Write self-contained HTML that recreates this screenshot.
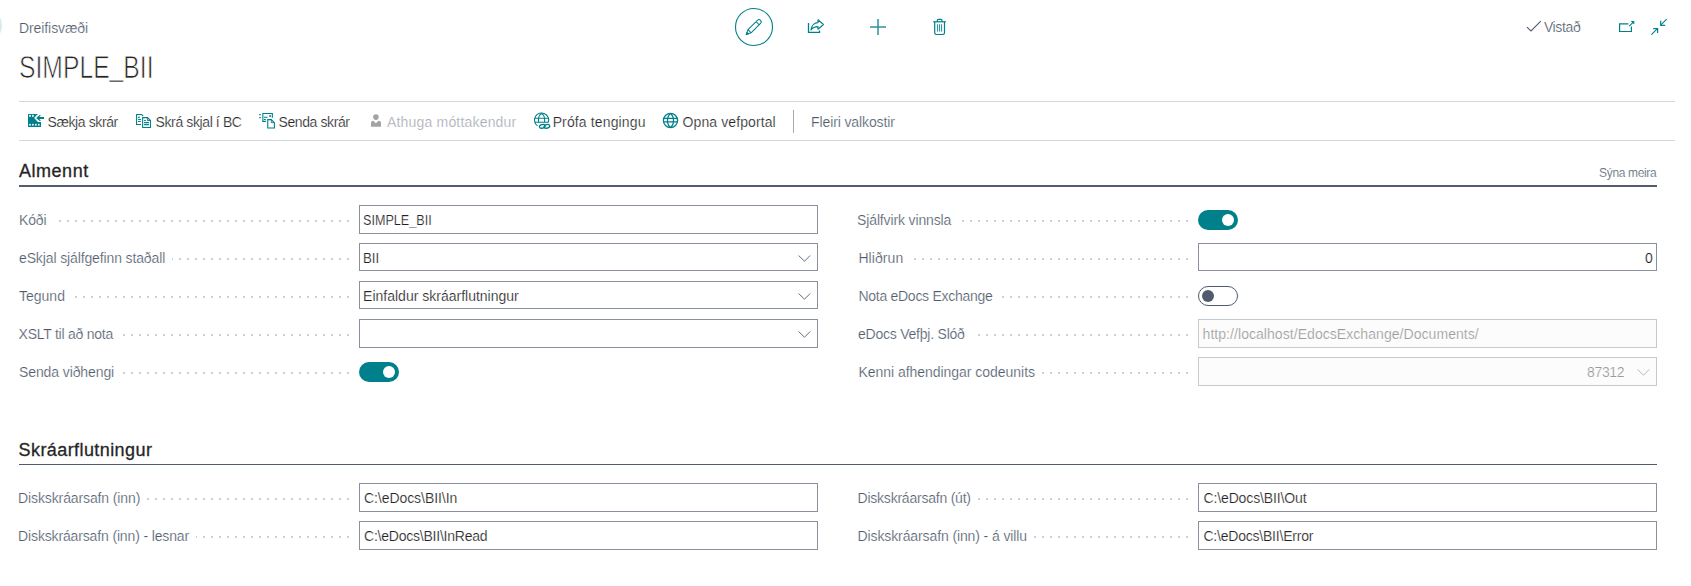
<!DOCTYPE html>
<html><head><meta charset="utf-8">
<style>
html,body{margin:0;padding:0;}
body{width:1691px;height:586px;overflow:hidden;background:#fff;position:relative;font-family:"Liberation Sans",sans-serif;font-size:13.5px;color:#212121;}
.x{position:absolute;white-space:nowrap;line-height:20px;-webkit-text-stroke:0.2px #fff;}
.hr{position:absolute;height:1px;background:#d4d7db;}
.blob{position:absolute;left:-33px;top:7.5px;width:35px;height:35px;border-radius:50%;background:#d6edf0;}
.title{position:absolute;left:19px;top:47px;font-size:30.5px;line-height:40px;color:#262626;transform:scaleX(0.81);transform-origin:0 0;-webkit-text-stroke:0.75px #fff;white-space:nowrap;}
.secline{position:absolute;left:19px;width:1638px;}
.dots{position:absolute;height:2px;background-image:linear-gradient(to right,#cdd0d5 2px,transparent 2px);background-size:8px 2px;background-repeat:repeat-x;}
.box{position:absolute;width:457px;height:27px;border:1px solid #8a919c;background:#fff;}
.box.d{border-color:#c6c9ce;background:#fcfcfc;}
.tog{position:absolute;width:40px;height:20px;border-radius:10px;box-sizing:border-box;}
.tog.on{background:#00808a;}
.tog.on i{position:absolute;left:24px;top:4px;width:12px;height:12px;border-radius:50%;background:#fff;}
.tog.off{border:1px solid #505c6d;background:#fff;}
.tog.off i{position:absolute;left:3px;top:3px;width:12px;height:12px;border-radius:50%;background:#505c6d;}
svg{position:absolute;overflow:visible;}
</style></head>
<body>
<div class="blob"></div>
<div class="title" id="title">SIMPLE<span style="position:relative;top:-2.5px">_</span>BII</div>
<!-- top center icons -->
<svg style="left:0;top:0" width="1691" height="150" viewBox="0 0 1691 150">
<g fill="none" stroke="#00808a" stroke-linejoin="round" stroke-linecap="round">
<circle cx="754" cy="27" r="18.5" stroke-width="1.1"/>
<g transform="translate(746.3,34.5) rotate(-45)" stroke-width="1.0">
<path d="M4.6,-2.2 L17.9,-2.2 A2.2,2.2 0 0 1 17.9,2.2 L4.6,2.2 Z M4.6,-2.2 L0,0 L4.6,2.2 M16,-2.2 L16,2.2"/>
<path d="M0,0 L1.9,-1 L1.9,1 Z" fill="#00808a"/>
</g>
<path d="M808.5,23 V32.4 H819.5 V30.6" stroke-width="1.3" stroke-linecap="butt" stroke-linejoin="miter"/>
<path d="M811,30 C811.5,25.5 814.5,22.6 818,22.6 L818,19.8 L823.4,24.5 L818,29.2 L818,26.6 C815,26.6 812.6,27.6 811,30 Z" stroke-width="1.15"/>
<path d="M870,27 H886 M878,19 V35" stroke-width="1.5" stroke="#2e9499" stroke-linecap="butt"/>
<path d="M937.3,21.5 V20.6 Q937.3,19.4 938.5,19.4 H940.8 Q942,19.4 942,20.6 V21.5" stroke-width="1.2"/>
<path d="M933.2,21.8 H945.8" stroke-width="1.2" stroke-linecap="butt"/>
<path d="M934.7,22 V32.8 Q934.7,34.5 936.4,34.5 H942.8 Q944.5,34.5 944.5,32.8 V22" stroke-width="1.2"/>
<path d="M937.6,24.2 V31.6 M939.6,24.2 V31.6 M941.6,24.2 V31.6" stroke-width="0.9" stroke-linecap="butt"/>
<path d="M1527,27.1 L1531,30.9 L1540.8,21.2" stroke="#505c6d" stroke-width="1.1" stroke-linecap="butt" stroke-linejoin="miter"/>
<path d="M1628.4,23.8 H1619.6 V31.5 H1631.4 V26.6" stroke-width="1.2" stroke-linecap="butt" stroke-linejoin="miter"/>
<path d="M1629.2,26.2 L1633.6,21.8" stroke-width="1.1" stroke-linecap="butt"/>
<path d="M1630.6,20.9 H1634.3 V24.6 Z" fill="#00808a" stroke="none"/>
<path d="M1651.4,34.6 L1657.2,28.8 M1666.6,19.2 L1661,24.8" stroke-width="1.1" stroke-linecap="butt"/>
<path d="M1653.2,28.6 H1657.6 V33 M1660.7,20.8 V25.3 H1665.2" stroke-width="1.2" stroke-linecap="butt" stroke-linejoin="miter"/>
</g>
<!-- action bar icons -->
<g fill="#00808a" stroke="none">
<path d="M28,114 H37.8 L34.1,117.9 L37.9,121.9 H41 V127 H28 Z"/>
<g fill="#fff"><rect x="29.2" y="114.9" width="1.6" height="1.9"/><rect x="32.1" y="114.9" width="1.6" height="1.9"/>
<rect x="29.2" y="123.9" width="1.6" height="1.7"/><rect x="32.1" y="123.9" width="1.6" height="1.7"/><rect x="35.1" y="123.9" width="1.6" height="1.7"/><rect x="38" y="123.9" width="1.6" height="1.7"/></g>
<path d="M36.2,118 L39.6,114.9 L41,115.4 L39.2,117.1 H44 V118.9 H39.2 L41,120.6 L39.6,121.1 Z"/>
</g>
<g fill="none" stroke="#00808a" stroke-width="1.1" stroke-linejoin="miter" stroke-linecap="butt">
<path d="M141,124.5 H136.6 V114.55 H141.6 L143.2,116.2"/>
<path d="M138.1,117.35 H139.8 M138.1,119.45 H140.9 M138.1,121.55 H140.9"/>
<path d="M142.65,117.6 H147.5 L150.5,120.6 V127.5 H142.65 Z"/>
<path d="M147.4,117.8 V120.5 H150.3" stroke-width="0.9"/>
<path d="M144.1,120.45 H145.8 M144.1,122.6 H148.9 M144.1,124.6 H148.9"/>
</g>
<g fill="none" stroke="#00808a" stroke-width="1.1" stroke-linejoin="miter" stroke-linecap="butt">
<path d="M259.2,114.55 H260.7 M259.2,117.65 H260.7" stroke-width="1.2"/>
<path d="M266,121.4 H262.85 V113.55 H272.35 V117.8"/>
<rect x="269.2" y="115.2" width="1.8" height="1.6" fill="#00808a" stroke="none"/>
<path d="M264,117.3 H267.6 M264,119.55 H265.8"/>
<path d="M267.75,119.65 H271.3 L274.4,122.7 V128 H267.75 Z"/>
<path d="M271.3,119.8 V122.6 H274.2" stroke-width="0.9"/>
</g>
<g fill="#a3a3a3" stroke="none">
<circle cx="375.9" cy="117.1" r="2.8"/>
<path d="M371,126.8 V123 Q371,120.8 373.2,120.8 L375.9,123.2 L378.6,120.8 Q381,120.8 381,123 V126.8 Z"/>
</g>
<g fill="none" stroke="#00808a" stroke-width="1.1">
<path d="M537.5,125.9 A7.1,7.1 0 1 1 548.3,122.5"/>
<path d="M534.6,118.3 H548.7 M534.8,122.3 H548.3"/>
<path d="M541.6,113.2 C539.2,115 538.5,117 538.5,118.3 V122.3 M541.6,113.2 C544,115 544.6,117 544.6,118.3 V122.3"/>
<ellipse cx="542.3" cy="126.3" rx="2.9" ry="1.8" transform="rotate(-15 542.3 126.3)" stroke-width="1.3"/>
<ellipse cx="546.9" cy="126.3" rx="2.9" ry="1.8" transform="rotate(-15 546.9 126.3)" stroke-width="1.3"/>
</g>
<g fill="none" stroke="#00808a" stroke-width="1.3">
<circle cx="670.5" cy="120.5" r="7.1"/>
<path d="M663.4,118.4 H677.6 M663.4,121.9 H677.6"/>
<path d="M670.5,113.4 C666.5,116.5 666.5,124.5 670.5,127.6 M670.5,113.4 C674.5,116.5 674.5,124.5 670.5,127.6"/>
</g>
</svg>
<div class="hr" style="left:19px;top:101px;width:1656px;"></div>
<div class="hr" style="left:19px;top:140px;width:1656px;"></div>
<div style="position:absolute;left:793px;top:110px;width:1px;height:23px;background:#a3a9b2;"></div>
<div class="secline" style="top:185px;height:2px;background:#525c6e;"></div>
<div class="secline" style="top:464px;height:1px;background:#505c6d;"></div>
<div class="box" style="left:359px;top:205px;height:27px;"></div>
<div class="box" style="left:359px;top:243px;height:26px;"></div>
<svg style="left:798px;top:255px" width="13" height="7" viewBox="0 0 13 7"><polyline points="0.6,0.5 6.5,6.2 12.2,0.5" fill="none" stroke="#505c6d" stroke-width="0.9"/></svg>
<div class="box" style="left:359px;top:281px;height:26px;"></div>
<svg style="left:798px;top:293px" width="13" height="7" viewBox="0 0 13 7"><polyline points="0.6,0.5 6.5,6.2 12.2,0.5" fill="none" stroke="#505c6d" stroke-width="0.9"/></svg>
<div class="box" style="left:359px;top:319px;height:27px;"></div>
<svg style="left:798px;top:331px" width="13" height="7" viewBox="0 0 13 7"><polyline points="0.6,0.5 6.5,6.2 12.2,0.5" fill="none" stroke="#505c6d" stroke-width="0.9"/></svg>
<div class="tog on" style="left:359px;top:362px;"><i></i></div>
<div class="tog on" style="left:1198px;top:210px;"><i></i></div>
<div class="box" style="left:1198px;top:243px;height:26px;"></div>
<div class="tog off" style="left:1198px;top:286px;"><i></i></div>
<div class="box d" style="left:1198px;top:319px;height:27px;"></div>
<div class="box d" style="left:1198px;top:357px;height:27px;"></div>
<svg style="left:1637px;top:369px" width="13" height="7" viewBox="0 0 13 7"><polyline points="0.6,0.5 6.5,6.2 12.2,0.5" fill="none" stroke="#a9aeb5" stroke-width="0.9"/></svg>
<div class="box" style="left:359px;top:483px;height:27px;"></div>
<div class="box" style="left:359px;top:521px;height:27px;"></div>
<div class="box" style="left:1198px;top:483px;height:27px;"></div>
<div class="box" style="left:1198px;top:521px;height:27px;"></div>
<div class="x" id="crumb" style="left:19.00px;font-size:14px;letter-spacing:-0.090px;top:18px;color:#505c6d;">Dreifisvæði</div>
<div class="x" id="act1" style="left:47.55px;font-size:14px;letter-spacing:-0.405px;top:112px;color:#262626;">Sækja skrár</div>
<div class="x" id="act2" style="left:155.55px;font-size:14px;letter-spacing:-0.386px;top:112px;color:#262626;">Skrá skjal í BC</div>
<div class="x" id="act3" style="left:278.55px;font-size:14px;letter-spacing:-0.405px;top:112px;color:#262626;">Senda skrár</div>
<div class="x" id="act4" style="left:387.00px;font-size:14px;letter-spacing:0.185px;top:112px;color:#a6abb3;">Athuga móttakendur</div>
<div class="x" id="act5" style="left:552.65px;font-size:14px;letter-spacing:0.138px;top:112px;color:#262626;">Prófa tengingu</div>
<div class="x" id="act6" style="left:682.55px;font-size:14px;letter-spacing:0.104px;top:112px;color:#262626;">Opna vefportal</div>
<div class="x" id="act7" style="left:811.10px;font-size:14px;letter-spacing:-0.120px;top:112px;color:#505c6d;">Fleiri valkostir</div>
<div class="x" id="vistad" style="left:1543.90px;font-size:14px;letter-spacing:-0.360px;top:17px;color:#505c6d;">Vistað</div>
<div class="x" id="sec1" style="left:19.00px;font-size:18px;letter-spacing:0.525px;top:159px;color:#262626;line-height:24px;-webkit-text-stroke:0.3px #262626;">Almennt</div>
<div class="x" id="syna" style="left:1599.10px;font-size:12px;letter-spacing:-0.350px;top:163px;color:#505c6d;">Sýna meira</div>
<div class="x" id="sec2" style="left:18.55px;font-size:18px;letter-spacing:0.420px;top:438px;color:#262626;line-height:24px;-webkit-text-stroke:0.3px #262626;">Skráarflutningur</div>
<div class="x" id="l1" style="left:19.00px;font-size:14px;letter-spacing:-0.150px;top:210px;color:#505c6d;">Kóði</div>
<div class="dots" style="left:53px;top:220px;width:296px;background-position:6px 0;"></div>
<div class="x" id="l2" style="left:19.00px;font-size:14px;letter-spacing:-0.126px;top:248px;color:#505c6d;">eSkjal sjálfgefinn staðall</div>
<div class="dots" style="left:172px;top:258px;width:177px;background-position:7px 0;"></div>
<div class="x" id="l3" style="left:19.00px;font-size:14px;letter-spacing:0.000px;top:286px;color:#505c6d;">Tegund</div>
<div class="dots" style="left:72px;top:296px;width:277px;background-position:3px 0;"></div>
<div class="x" id="l4" style="left:18.55px;font-size:14px;letter-spacing:-0.240px;top:324px;color:#505c6d;">XSLT til að nota</div>
<div class="dots" style="left:121px;top:334px;width:228px;background-position:2px 0;"></div>
<div class="x" id="l5" style="left:19.00px;font-size:14px;letter-spacing:-0.104px;top:362px;color:#505c6d;">Senda viðhengi</div>
<div class="dots" style="left:121px;top:372px;width:228px;background-position:2px 0;"></div>
<div class="x" id="r1" style="left:857.10px;font-size:14px;letter-spacing:-0.141px;top:210px;color:#505c6d;">Sjálfvirk vinnsla</div>
<div class="dots" style="left:959px;top:220px;width:229px;background-position:3px 0;"></div>
<div class="x" id="r2" style="left:858.45px;font-size:14px;letter-spacing:0.075px;top:248px;color:#505c6d;">Hliðrun</div>
<div class="dots" style="left:910px;top:258px;width:278px;background-position:4px 0;"></div>
<div class="x" id="r3" style="left:858.45px;font-size:14px;letter-spacing:-0.275px;top:286px;color:#505c6d;">Nota eDocs Exchange</div>
<div class="dots" style="left:1000px;top:296px;width:188px;background-position:2px 0;"></div>
<div class="x" id="r4" style="left:858.00px;font-size:14px;letter-spacing:-0.225px;top:324px;color:#505c6d;">eDocs Vefþj. Slóð</div>
<div class="dots" style="left:972px;top:334px;width:216px;background-position:6px 0;"></div>
<div class="x" id="r5" style="left:858.45px;font-size:14px;letter-spacing:-0.035px;top:362px;color:#505c6d;">Kenni afhendingar codeunits</div>
<div class="dots" style="left:1042px;top:372px;width:146px;background-position:0px 0;"></div>
<div class="x" id="l6" style="left:18.10px;font-size:14px;letter-spacing:-0.118px;top:488px;color:#505c6d;">Diskskráarsafn (inn)</div>
<div class="dots" style="left:147px;top:498px;width:202px;background-position:0px 0;"></div>
<div class="x" id="l7" style="left:18.10px;font-size:14px;letter-spacing:-0.145px;top:526px;color:#505c6d;">Diskskráarsafn (inn) - lesnar</div>
<div class="dots" style="left:196px;top:536px;width:153px;background-position:7px 0;"></div>
<div class="x" id="r6" style="left:857.55px;font-size:14px;letter-spacing:-0.225px;top:488px;color:#505c6d;">Diskskráarsafn (út)</div>
<div class="dots" style="left:978px;top:498px;width:210px;background-position:0px 0;"></div>
<div class="x" id="r7" style="left:857.55px;font-size:14px;letter-spacing:-0.109px;top:526px;color:#505c6d;">Diskskráarsafn (inn) - á villu</div>
<div class="dots" style="left:1034px;top:536px;width:154px;background-position:0px 0;"></div>
<div class="x" id="i1" style="left:363.00px;font-size:14px;letter-spacing:0.000px;top:210px;color:#212121;transform:scaleX(0.9);transform-origin:0 0;">SIMPLE_BII</div>
<div class="x" id="i2" style="left:363.00px;font-size:14px;letter-spacing:0.000px;top:248px;color:#212121;transform:scaleX(0.95);transform-origin:0 0;">BII</div>
<div class="x" id="i3" style="left:363.10px;font-size:14px;letter-spacing:0.000px;top:286px;color:#212121;">Einfaldur skráarflutningur</div>
<div class="x" id="i4" style="left:1645.00px;font-size:14px;letter-spacing:0.000px;top:248px;color:#212121;">0</div>
<div class="x" id="i5" style="left:1202.55px;font-size:14px;letter-spacing:0.056px;top:324px;color:#9a9a9a;">http://localhost/EdocsExchange/Documents/</div>
<div class="x" id="i6" style="left:1587.00px;font-size:14px;letter-spacing:-0.337px;top:362px;color:#9a9a9a;">87312</div>
<div class="x" id="i7" style="left:364.00px;font-size:14px;letter-spacing:-0.064px;top:488px;color:#212121;">C:\eDocs\BII\In</div>
<div class="x" id="i8" style="left:364.00px;font-size:14px;letter-spacing:-0.225px;top:526px;color:#212121;">C:\eDocs\BII\InRead</div>
<div class="x" id="i9" style="left:1203.45px;font-size:14px;letter-spacing:-0.120px;top:488px;color:#212121;">C:\eDocs\BII\Out</div>
<div class="x" id="i10" style="left:1203.45px;font-size:14px;letter-spacing:-0.212px;top:526px;color:#212121;">C:\eDocs\BII\Error</div>
</body></html>
